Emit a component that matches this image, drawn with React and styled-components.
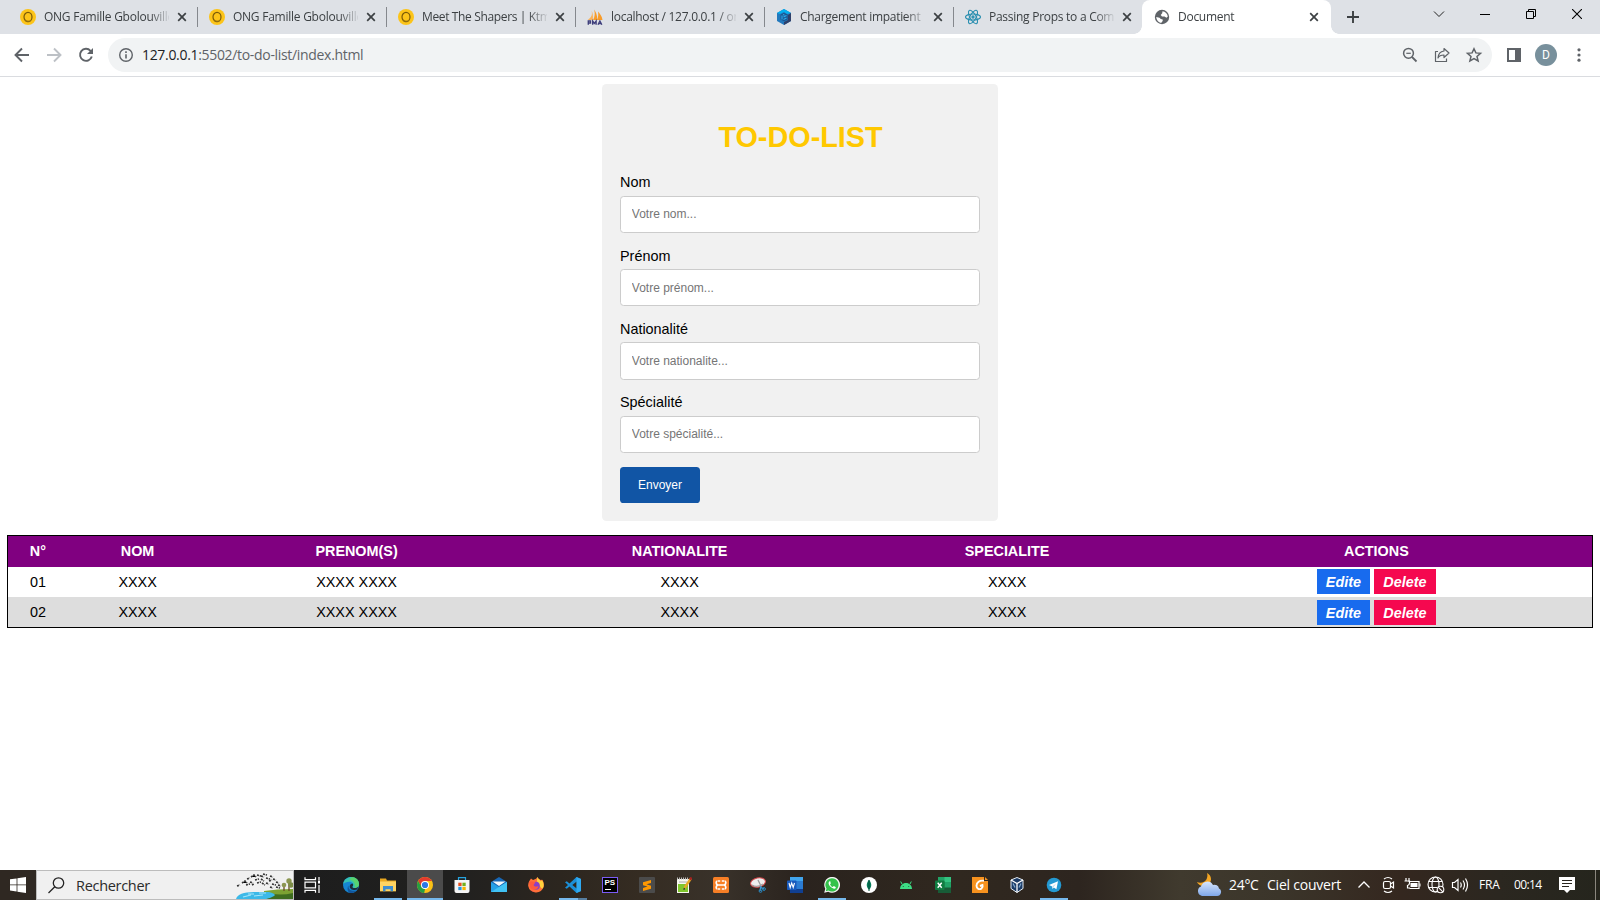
import React from "react";
import styled, { createGlobalStyle } from "styled-components";

const GlobalStyle = createGlobalStyle`
  * { box-sizing: border-box; }
  html, body { margin: 0; height: 100%; overflow: hidden; background: #fff; }
`;

const Screen = styled.div`
  width: 1600px;
  height: 900px;
  display: flex;
  flex-direction: column;
  font-family: "Liberation Sans", Arial, sans-serif;
`;

/* ---------- browser chrome ---------- */

const TabStrip = styled.div`
  height: 34px;
  flex: none;
  display: flex;
  background: #dee1e6;
  padding-left: 9px;
  font-family: "Open Sans", "Noto Sans", sans-serif;
`;

const TabBox = styled.div`
  width: 189px;
  height: 34px;
  flex: none;
  display: flex;
  align-items: center;
  padding: 0 8px 0 ${(p) => (p.$active ? 12 : 11)}px;
  margin-left: ${(p) => (p.$active ? -1 : 0)}px;
  position: relative;
  color: #3c4043;
  background: ${(p) => (p.$active ? "#fff" : "transparent")};
  border-radius: 8px 8px 0 0;
  &::before, &::after {
    content: "";
    display: ${(p) => (p.$active ? "block" : "none")};
    position: absolute;
    bottom: 0;
    width: 8px;
    height: 8px;
  }
  &::before {
    left: -8px;
    background: radial-gradient(circle at 0 0, #dee1e6 7.5px, #fff 8px);
  }
  &::after {
    right: -8px;
    background: radial-gradient(circle at 100% 0, #dee1e6 7.5px, #fff 8px);
  }
`;

const TabTitle = styled.span`
  width: ${(p) => (p.$active ? 123 : 125)}px;
  margin-left: 8px;
  overflow: hidden;
  white-space: nowrap;
  font-size: 12px;
  line-height: 20px;
  letter-spacing: ${(p) => p.$spacing || 0}px;
  mask-image: linear-gradient(to right, #000 106px, transparent 127px);
`;

const TabClose = styled.svg`
  width: 10px;
  height: 10px;
  margin-left: 8px;
`;

const TabDivider = styled.i`
  position: absolute;
  right: 0;
  top: 7px;
  width: 1px;
  height: 20px;
  background: #85888d;
`;

const NewTab = styled.svg`
  width: 16px;
  height: 16px;
  margin: 9px 0 0 14px;
`;

const WindowButtons = styled.div`
  margin-left: auto;
  display: flex;
  height: 28px;
`;

const WindowButton = styled.div`
  width: 46px;
  display: grid;
  place-items: center;
`;

const Toolbar = styled.div`
  height: 43px;
  flex: none;
  display: flex;
  align-items: center;
  background: #fff;
  border-bottom: 1px solid #dadce0;
  padding: 0 10px 0 12px;
  svg { flex: none; }
`;

const NavIcons = styled.div`
  display: flex;
  gap: 12px;
  width: 96px;
`;

const AddressBar = styled.div`
  width: 1384px;
  height: 34px;
  border-radius: 17px;
  background: #f1f3f4;
  display: flex;
  align-items: center;
  padding: 0 8px 0 8px;
`;

const Url = styled.span`
  flex: 1;
  margin-left: 6px;
  padding-bottom: 1px;
  font: 14px/20px "Open Sans", "Noto Sans", sans-serif;
  letter-spacing: -0.32px;
  color: #5f6368;
  b { font-weight: 400; color: #202124; }
`;

const AddressIcons = styled.div`
  display: flex;
  gap: 12px;
`;

const ToolbarEnd = styled.div`
  display: flex;
  align-items: center;
  margin-left: 12px;
`;

const Avatar = styled.div`
  width: 22px;
  height: 22px;
  border-radius: 50%;
  margin: 0 12px 0 11px;
  background: #78909c;
  color: #fff;
  display: grid;
  place-items: center;
  font: 12px/22px Roboto, sans-serif;
`;

/* ---------- page ---------- */

const Page = styled.main`
  height: 793px;
  padding: 7.2px;
  font-size: 14.4px;
  color: #000;
`;

const FormCard = styled.form`
  width: 396px;
  height: 437px;
  margin: 0 auto;
  padding: 18px;
  border-radius: 4.5px;
  background: #f1f1f1;
`;

const Title = styled.h1`
  margin: 19.3px 0 19px;
  padding-left: 1px;
  font-size: 28.8px;
  line-height: 33px;
  text-align: center;
  color: #ffc800;
`;

const Field = styled.label`
  display: block;
  height: 73.3px;
  padding-top: 1px;
  line-height: 17px;
`;

const TextInput = styled.input`
  display: block;
  width: 360px;
  height: 37.5px;
  margin-top: 4.2px;
  padding: 0 10.8px;
  border: 1px solid #ccc;
  border-radius: 3.6px;
  background: #fff;
  font: 12px "Liberation Sans", Arial, sans-serif;
  &::placeholder { color: #757575; }
`;

const SubmitButton = styled.button`
  display: block;
  width: 80px;
  height: 36px;
  padding: 0;
  border: 0;
  border-radius: 3.6px;
  background: #1155a5;
  color: #fff;
  font: 12px "Liberation Sans", Arial, sans-serif;
`;

const Table = styled.section`
  width: 1586px;
  margin-top: 13.8px;
  border: 1px solid #000;
`;

const Row = styled.div`
  display: grid;
  grid-template-columns: 59.4px 140px 298px 348px 307px 431.6px;
  height: ${(p) => (p.$head ? 31 : 30)}px;
  align-items: center;
  text-align: center;
  background: ${(p) => p.$bg};
  color: ${(p) => (p.$head ? "#fff" : "#000")};
  font-weight: ${(p) => (p.$head ? 700 : 400)};
`;

const Actions = styled.div`
  display: flex;
  justify-content: center;
  gap: 4px;
  padding-top: ${(p) => p.$shift || 0}px;
`;

const ActionButton = styled.span`
  height: 25px;
  width: ${(p) => p.$width}px;
  background: ${(p) => p.$bg};
  color: #fff;
  font-weight: 700;
  font-style: italic;
  line-height: 26px;
`;

/* ---------- taskbar ---------- */

const Taskbar = styled.footer`
  height: 30px;
  display: flex;
  color: #fff;
  font-family: "Open Sans", "Noto Sans", sans-serif;
  background: linear-gradient(90deg, #2f2822 0, #2f2822 36px, #1d1d1d 294px, #20201f 450px, #2c261f 560px, #352c22 640px, #39322a 720px, #2a231e 800px, #30281f 960px, #2d251f 1080px, #403a2e 1180px, #3b352a 1280px, #34271f 1400px, #2b2720 1500px, #25251d 1600px);
`;

const Start = styled.div`
  width: 36px;
  display: grid;
  place-items: center;
`;

const Search = styled.div`
  width: 258px;
  display: flex;
  align-items: center;
  background: #f0f0f0;
  border: 1px solid #bcbcbc;
  padding-left: 11px;
  color: #2b2b2b;
  svg { flex: none; }
`;

const SearchText = styled.span`
  width: 161px;
  margin-left: 11px;
  font-size: 14.5px;
  letter-spacing: -0.3px;
`;

const Apps = styled.div`
  display: flex;
  gap: 1px;
  & > :first-child { margin-right: 2px; }
`;

const AppSlot = styled.div`
  width: 36px;
  height: 30px;
  display: grid;
  place-items: center;
  background:
    ${(p) => (p.$line ? `linear-gradient(${p.$line}) 50% 100% / ${p.$full ? 36 : 28}px 2px no-repeat,` : "")}
    ${(p) => (p.$full ? "#4b4b4b" : "transparent")};
`;

const Tray = styled.div`
  margin-left: auto;
  width: 404px;
  display: flex;
  align-items: center;
  svg { flex: none; }
`;

const TrayText = styled.span`
  flex: none;
  width: ${(p) => p.$width}px;
  font-size: ${(p) => p.$size}px;
  letter-spacing: ${(p) => p.$spacing}px;
  white-space: nowrap;
  line-height: 28px;
`;

const TrayIcons = styled.div`
  flex: none;
  display: flex;
  gap: 6px;
  width: 124px;
`;

const ShowDesktop = styled.i`
  width: 1px;
  height: 30px;
  margin-left: 20px;
  background: #8a867e;
`;

/* ---------- drawings ---------- */

const S = ({ s = 16, box = 16, children, ...rest }) => (
  <svg width={s} height={s} viewBox={`0 0 ${box} ${box}`} fill="none" {...rest}>{children}</svg>
);

const SunIcon = () => (
  <S><circle cx="8" cy="8" r="8" fill="#fcc419" /><ellipse cx="8" cy="8" rx="4" ry="4.6" stroke="#7a5a08" strokeWidth="1.2" /><path d="M5 12h6" stroke="#b48a12" strokeWidth=".8" /></S>
);
const PmaIcon = () => (
  <S>
    <path d="M4.5 1.500C5.500 5 5 8 .8 11h5C6.300 7 5.800 4 4.500 1.500z" fill="#f9b25c" />
    <path d="M7 .5c1.200 3 1 7.500-1 10.500h4.300C10.300 6 9 3 7 .5zM11 2.500c.5 3 .3 5.500-.8 8.500H15.500C15 7 13 5 11 2.500z" fill="#f89c2a" />
    <path d="M1.300 15.700v-3.700h2.200v2H1.300M5.700 15.700v-3.700l1.700 2.300 1.700-2.300v3.700M11 15.700l1.900-3.700 1.900 3.700M11.700 14.600h2.400" stroke="#3f3f7c" strokeWidth="1.400" />
  </S>
);
const CubeIcon = () => (
  <S><path d="M8 0l7 4v8l-7 4-7-4V4z" fill="#2379bd" /><path d="M8 0l7 4-4 1-3-2-4 2-3-1z" fill="#03afef" /><path d="M15 4v8l-7 4v-3l4-2V6z" fill="#2f406a" /><path d="M4.500 5.500L8 3.800l3.700 1.800v4.800L8 12.200l-3.500-1.800z" fill="#1c5690" /><path d="M6 6.500v4M7.500 8l3-1.500M7.500 10.500l3-1.500M7 5.500l1.500.8" stroke="#2aaef0" strokeWidth="1.100" /></S>
);
const ReactIcon = () => (
  <S stroke="#2b8fb0" strokeWidth="1.100">
    <ellipse cx="8" cy="8" rx="7.500" ry="3" /><ellipse cx="8" cy="8" rx="7.500" ry="3" transform="rotate(60 8 8)" /><ellipse cx="8" cy="8" rx="7.500" ry="3" transform="rotate(120 8 8)" /><circle cx="8" cy="8" r="1.100" fill="#2b8fb0" />
  </S>
);
const GlobeIcon = () => (
  <S><circle cx="8" cy="8" r="7.200" fill="#5f6368" /><path d="M8.500 2.200c2.800.2 5 2.500 5.300 5.300l-1.300 1.200-2-1.200H8L6.700 6l1.500-1.700zM2.200 8l3.300.7 1.300 1.300 1.900.4v1.600l-1.600 1.900C4.500 13.400 2.300 11 2.200 8z" fill="#fff" /></S>
);
const TabCross = () => (
  <TabClose viewBox="0 0 10 10"><path d="M1.200 1.200l7.600 7.600M8.800 1.200L1.200 8.800" stroke="#3c4043" strokeWidth="1.700" /></TabClose>
);

const BackIcon = () => <S s={20} box={20}><path d="M17 10H4M10 3.500L3.500 10l6.500 6.500" stroke="#5f6368" strokeWidth="1.900" /></S>;
const ForwardIcon = () => <S s={20} box={20}><path d="M3 10h13M10 3.500l6.500 6.500-6.500 6.500" stroke="#bdc1c6" strokeWidth="1.900" /></S>;
const ReloadIcon = () => <S s={20} box={20}><path d="M15.800 11.500A6 6 0 1 1 14.500 5.800L16 7.500" stroke="#5f6368" strokeWidth="1.900" /><path d="M17 3v6h-6z" fill="#5f6368" /></S>;
const InfoIcon = () => <S s={20} box={20}><circle cx="10" cy="10" r="6.300" stroke="#5f6368" strokeWidth="1.400" /><path d="M10 9.200v4.300M10 6.200v1.700" stroke="#5f6368" strokeWidth="1.600" /></S>;
const ZoomOutIcon = () => <S s={20} box={20}><circle cx="8.500" cy="8.300" r="4.900" stroke="#5f6368" strokeWidth="1.500" /><path d="M12 12l4.500 4.500" stroke="#5f6368" strokeWidth="1.800" /><path d="M6.300 8.300h4.500" stroke="#5f6368" strokeWidth="1.200" /></S>;
const ShareIcon = () => <S s={20} box={20} stroke="#5f6368" strokeWidth="1.200" strokeLinejoin="round"><path d="M6 6.500H3.500v10h11v-3" /><path d="M12 3.500l5 4.500-5 4.500V10c-3 0-5 .8-6 3 .2-4 2.500-6.500 6-7z" /></S>;
const StarIcon = () => <S s={20} box={20}><path d="M10 3.700l1.900 4.200 4.600.4-3.500 3.100 1.100 4.500L10 13.500l-4.100 2.400L7 11.400 3.500 8.300l4.600-.4z" stroke="#5f6368" strokeWidth="1.500" /></S>;

const StartLogo = () => (
  <S s={16} fill="#fff"><path d="M0 2.300l6.600-.9v6.100H0zM7.400 1.300L16 0v7.500H7.400zM0 8.300h6.600v6.200L0 13.600zM7.400 8.300H16V16l-8.600-1.300z" /></S>
);
const BirdScene = () => (
  <svg width="57" height="28" viewBox="0 0 57 28">
    <path d="M28 20q13-2 29-2v10H28z" fill="#7da233" /><path d="M34 22q10 3 23 0v6H31z" fill="#3f6d20" />
    <path d="M0 28q2-7 18-7h15q8 2 5 4t-8 3z" fill="#3cb9e8" /><path d="M7 26l8-2M18 25l9-1M12 23h6M23 22h7" stroke="#a3e5fa" strokeWidth="1.200" />
    <path d="M1 15l3-1M6 12l3-2 2 2M11 8l3-1M14 11l3 1M15 6l3-2 2 2M19 9l4-1M21 4l4 1M25 8l3 2M27 3l4 1M25 5l3 1M30 7l4 1M33 10l3-1M34 5l3 1M37 8l3 1M30 12l3 1M36 13l4 1M21 12l4-1M40 11l3 1M42 14l3 1M10 14l4-1M26 12l3 2M34 16l3 1M40 16l4 1M16 14l2-1" stroke="#343434" strokeWidth="1.600" strokeDasharray="2 .8" />
    <path d="M48 20v-5M53 20V10" stroke="#694c23" strokeWidth="1.300" /><circle cx="48" cy="14" r="2.300" fill="#8c9652" /><circle cx="53" cy="10" r="2.700" fill="#8b9650" /><circle cx="55" cy="14" r="2.700" fill="#7d8d48" />
  </svg>
);

const appIcons = {
  tasks: <S stroke="#fff" strokeWidth="1.200"><path d="M1 .3v2.400h10.500V.3M1 15.700v-2.400h10.500v2.400M1 5.200h10.500v5.600H1zM15 0v3M15 8v8" /><path d="M14 3.500h2v3h-2z" fill="#fff" stroke="none" /></S>,
  edge: <S><circle cx="8" cy="8" r="8" fill="#1685d1" /><path d="M.2 7C1 2 5 0 8.200 0 13 0 16 3.300 16 7c0 3-2.200 4-4.300 4-2 0-2.700-.8-2.200-1.600C11 7 9 4.700 6.500 4.700 3.500 4.700 1.200 6 .2 7z" fill="#35c1b2" /><path d="M9 0c4.500.3 7 3.500 7 7 0 3-2.200 4-4.300 4 1-3-.2-7.500-5.700-8.500z" fill="#63d85a" opacity=".75" /><path d="M5.500 8.500c-.5 4 3.500 6.500 8.500 4.800A8 8 0 0 1 7 16C4 15 4 10.500 5.500 8.500z" fill="#12569d" /><path d="M9.700 6.500c1 1.400.3 2.400-.2 3-.5.900.3 1.500 2.200 1.500 1.500 0 2.800-.4 3.500-1.200l-.9 2.800c-4 1.200-8-.4-7.500-3.600.2-1.300 1.400-2.500 2.900-2.500z" fill="#1d2c3a" /></S>,
  files: <S><path d="M0 1.500h6l1 2h9v10.700H0z" fill="#e9a820" /><path d="M0 4.500h16v9.700H0z" fill="#ffd462" /><path d="M3 14.200V9h10v5.200h-2.500v-2h-5v2z" fill="#3e8ed0" /></S>,
  chrome: <S><circle cx="8" cy="8" r="8" fill="#fbc116" /><path d="M1.100 4A8 8 0 0 1 14.900 4H8L4.500 10z" fill="#e33b2e" /><path d="M1.100 4l3.500 6L8 12l-.8 4A8 8 0 0 1 1.100 4z" fill="#269f42" /><circle cx="8" cy="8" r="4" fill="#fff" /><circle cx="8" cy="8" r="3.100" fill="#2b78e4" /></S>,
  store: <S><path d="M4.500 3V.7h7V3" stroke="#27a4e0" strokeWidth="1.200" /><path d="M.5 3h15v11q0 2-2 2h-11q-2 0-2-2z" fill="#f5f5f5" /><path d="M4.300 5.700h3.300V9H4.300z" fill="#e94e1b" /><path d="M8.400 5.700h3.300V9H8.400z" fill="#72b01d" /><path d="M4.300 9.800h3.300v3.300H4.300z" fill="#2795dd" /><path d="M8.400 9.800h3.300v3.300H8.400z" fill="#f7b500" /></S>,
  mail: <S><path d="M0 5l8-5 8 5v10H0z" fill="#1767b5" /><path d="M1.500 4.500h13L8 9z" fill="#f1f7fb" /><path d="M0 5l8 5 8-5v10H0z" fill="#26a0e6" /><path d="M0 15L16 5v10z" fill="#41c2f3" /></S>,
  firefox: <S><path d="M2 3l1-1.500L5 3l3-1.300L9.500 0c.5 2 2.200 2 3.500 3.300L14 2.600c2 2.500 2.200 5.200 1.600 7.400A8 8 0 0 1 .2 9C0 6.500 1 4.500 2 3z" fill="#ff7139" /><path d="M9.500 0c.5 2 2.500 2.500 3.500 4.300L14 3c2 3 2 6 1 8-2 2-3-3-5-5C8.500 4.500 9 2 9.500 0z" fill="#ffd23d" /><circle cx="7.800" cy="8.700" r="4" fill="#8a3fc8" /><path d="M1 5c3-1 4 0 6.500.2L5.500 8c1 2 3 1.700 5 1.200-.5 3.500-5 4.800-8 2z" fill="#ff5a3d" /><path d="M.5 9.500c1.500 4.500 6 6.500 10 5A8 8 0 0 1 .5 9.500z" fill="#f0306d" /></S>,
  code: <S><path d="M11.500 0L16 2v12l-4.500 2L4.500 9.500 1.800 11.700 0 10.800l3-2.800-3-2.800 1.800-.9 2.700 2.200zM11.700 4.500L7.300 8l4.400 3.500z" fill="#1b8fd8" fillRule="evenodd" /><path d="M11.500 0L16 2v12l-4.500 2z" fill="#2faaf1" /></S>,
  sublime: <S><rect width="16" height="16" rx="1" fill="#4b4b4b" /><path d="M12 3v3L7.500 7.300 12 8.800v3L4 14v-3l4.500-1.400L4 8.200v-3z" fill="#ff9800" /></S>,
  notepad: <S><path d="M1 2h12v14H1z" fill="#f7f7ef" /><path d="M2 7h10v8H2z" fill="#7fc62c" /><path d="M1 1.500h12" stroke="#bbb" strokeWidth="2" strokeDasharray="1 1" /><path d="M3 5h8" stroke="#aaa" /><path d="M14.800 1.500L8.500 11" stroke="#e5a825" strokeWidth="2.400" /><path d="M15.500.5L14 2.700" stroke="#a32220" strokeWidth="2.400" /><path d="M8.500 11l-.7 1.800" stroke="#333" strokeWidth="1.300" /></S>,
  xampp: <S><rect width="16" height="16" rx="1.500" fill="#f77f26" /><path d="M5 4h6M5 12h6M4.500 4c-1.800 0-1.800 3.700.5 4-2.300.3-2.300 4-.5 4M11.500 4c1.800 0 1.800 3.700-.5 4 2.300.3 2.300 4 .5 4M5 8h6" stroke="#fff" strokeWidth="1.700" /><path d="M8 2.500v3.500M8 10v3.500" stroke="#f77f26" strokeWidth="1.600" /></S>,
  snip: <S><ellipse cx="8" cy="5.500" rx="7.500" ry="4.500" transform="rotate(-12 8 5.500)" fill="#eee" stroke="#d74a4d" strokeWidth="1" /><path d="M2 8q5 3 11-1M8 3l3 6" stroke="#9c9c9c" strokeWidth="1.300" /><path d="M10 10l4 2M11 9l-1 5" stroke="#3a9bdc" strokeWidth="1.300" /><circle cx="14" cy="12" r="1.400" stroke="#2988bf" /><circle cx="10.500" cy="14" r="1.400" stroke="#2988bf" /></S>,
  word: <S><rect x="3" width="13" height="16" rx="1" fill="#2b7cd3" /><path d="M3 0h13v4H3z" fill="#41a5ee" /><path d="M3 12h13v4H3z" fill="#103f91" /><rect y="3.500" width="9.500" height="9.500" rx=".8" fill="#185abd" /><path d="M2 6l1.200 4.500L4.700 6l1.500 4.500L7.500 6" stroke="#fff" strokeWidth="1.100" /></S>,
  whatsapp: <S><path d="M.2 15.800l1.100-4A7.900 7.900 0 1 1 4.200 14.700z" fill="#f5f5f5" /><path d="M1.800 14.200l.7-2.600A6.600 6.600 0 1 1 4.500 13.500z" fill="#34c24b" /><path d="M5.600 4.200c-2 1.300-.6 4 1 5.500s4 2.900 5.200 1.200l-.2-1-1.800-.8-1 1C7.700 9.700 6.600 8.600 6 7.400l.8-1L6.300 4.300z" fill="#fff" /></S>,
  mongo: <S><circle cx="8" cy="8" r="8" fill="#fff" /><path d="M8 2.800c3 3.500 3 7.200 0 10-3-2.800-3-6.500 0-10z" fill="#087d5b" /><path d="M8 3v11" stroke="#00513b" /></S>,
  android: <S><path d="M2 12c.2-3.500 2.500-6 6-6s5.800 2.500 6 6z" fill="#3ddc84" /><path d="M4 7L2.700 4.500M12 7l1.300-2.500" stroke="#3ddc84" /><circle cx="5.300" cy="9.500" r=".6" fill="#254" /><circle cx="10.700" cy="9.500" r=".6" fill="#254" /></S>,
  excel: <S><path d="M3 0h13v16H3z" fill="#21a366" /><path d="M9.500 0H16v5H9.500z" fill="#33c481" /><path d="M3 5h6.500v5.500H3z" fill="#107c41" /><path d="M3 10.500h13V16H3z" fill="#185c37" /><rect y="3.500" width="9.500" height="9.500" rx=".8" fill="#107c41" /><path d="M2.700 5.800l4 5M6.700 5.800l-4 5" stroke="#fff" strokeWidth="1.400" /></S>,
  foxit: <S><path d="M0 0h12v4h4v12H0z" fill="#f7921e" /><path d="M13 0l3 3h-3z" fill="#f7921e" /><path d="M12 3.800C7.500 3 4.500 5.500 4.500 8.700c0 3 3 4.300 5 2.800 1.200-1 1.500-2 1-3.500L8 9" stroke="#fff" strokeWidth="1.900" /></S>,
  vbox: <S><path d="M8 .5l6 2.500v8.500l-6 4-6-4V3z" fill="#1b3b66" stroke="#e5edf5" strokeWidth="1" /><path d="M2 3l6 3.500L14 3M8 6.500v9" stroke="#fff" strokeWidth="1.300" /><path d="M4 6.500l2 4M12 6.500l-2 4" stroke="#7ba4cc" strokeWidth="1.300" /></S>,
  telegram: <S><circle cx="8" cy="8" r="7.300" fill="#2499d2" /><path d="M3 8l9-3.700-1.600 8-2.600-1.700L6.500 12l-.3-2.500z" fill="#fff" /><path d="M6.300 9.500l4-3.300-3 4z" fill="#b7d9ed" /></S>,
};

const PsBox = styled.div`
  width: 16px;
  height: 16px;
  border: 1px solid #7b5cf5;
  background: #000;
  color: #fff;
  font: 700 8px/9px "Liberation Sans", sans-serif;
  padding-left: 1.5px;
  &::after {
    content: "";
    display: block;
    width: 6px;
    height: 1px;
    margin-top: 2px;
    background: #fff;
  }
`;

const WeatherSvg = styled.svg`
  width: 26px;
  height: 24px;
  margin-right: 7px;
`;

const Weather = () => (
  <WeatherSvg viewBox="0 0 26 24">
    <defs><linearGradient id="cloud" x2="0" y2="1"><stop stopColor="#d7e6fd" /><stop offset="1" stopColor="#7fa7e8" /></linearGradient></defs>
    <path d="M11 0c1 3 0 7-2.500 8.500S3 10 1 9c1 2 4 5 8 4s6-4 6-7-2-5-4-6z" fill="#f5a623" />
    <path d="M6 23a5 5 0 0 1-1-9.500 6.500 6.500 0 0 1 12-1.500 4.500 4.500 0 0 1 6 3.500 4 4 0 0 1-2 7.500z" fill="url(#cloud)" />
  </WeatherSvg>
);

/* ---------- data ---------- */

const tabs = [
  { icon: <SunIcon />, title: "ONG Famille Gbolouville", spacing: -0.25 },
  { icon: <SunIcon />, title: "ONG Famille Gbolouville", spacing: -0.25 },
  { icon: <SunIcon />, title: "Meet The Shapers | Ktm", spacing: -0.36 },
  { icon: <PmaIcon />, title: "localhost / 127.0.0.1 / on", spacing: -0.28 },
  { icon: <CubeIcon />, title: "Chargement impatient | S", spacing: -0.29 },
  { icon: <ReactIcon />, title: "Passing Props to a Comp", spacing: -0.27 },
  { icon: <GlobeIcon />, title: "Document", spacing: -0.27, active: true },
];

const fields = [
  ["Nom", "Votre nom..."],
  ["Prénom", "Votre prénom..."],
  ["Nationalité", "Votre nationalite..."],
  ["Spécialité", "Votre spécialité..."],
];

const headings = ["N°", "NOM", "PRENOM(S)", "NATIONALITE", "SPECIALITE", "ACTIONS"];
const people = [
  { cells: ["01", "XXXX", "XXXX XXXX", "XXXX", "XXXX"], bg: "#fff", shift: 0 },
  { cells: ["02", "XXXX", "XXXX XXXX", "XXXX", "XXXX"], bg: "#ddd", shift: 1 },
];

const blue = "#76b9ed, #76b9ed";
const apps = [
  { icon: appIcons.tasks }, { icon: appIcons.edge }, { icon: appIcons.files, line: blue },
  { icon: appIcons.chrome, line: blue, full: true }, { icon: appIcons.store }, { icon: appIcons.mail },
  { icon: appIcons.firefox }, { icon: appIcons.code, line: "90deg, #76b9ed 19px, #577fa0 19px" },
  { icon: <PsBox>PS</PsBox> }, { icon: appIcons.sublime }, { icon: appIcons.notepad },
  { icon: appIcons.xampp }, { icon: appIcons.snip }, { icon: appIcons.word },
  { icon: appIcons.whatsapp, line: blue }, { icon: appIcons.mongo }, { icon: appIcons.android },
  { icon: appIcons.excel }, { icon: appIcons.foxit }, { icon: appIcons.vbox },
  { icon: appIcons.telegram, line: blue },
];

export default function App() {
  return (
    <Screen>
      <GlobalStyle />
      <TabStrip>
        {tabs.map((t, i) => (
          <TabBox key={i} $active={t.active}>
            {t.icon}
            <TabTitle $spacing={t.spacing} $active={t.active}>{t.title}</TabTitle>
            <TabCross />
            {i < 5 && <TabDivider />}
          </TabBox>
        ))}
        <NewTab viewBox="0 0 16 16"><path d="M8 2v12M2 8h12" stroke="#3c4043" strokeWidth="1.900" /></NewTab>
        <WindowButtons>
          <WindowButton><S s={12} box={12}><path d="M1 3.500l5 5 5-5" stroke="#222" /></S></WindowButton>
          <WindowButton><S s={10} box={10}><path d="M0 5.500h10" stroke="#000" /></S></WindowButton>
          <WindowButton><S s={10} box={10}><path d="M.5 2.500h7v7h-7zM2.500 2.500v-2h7v7h-2" stroke="#000" /></S></WindowButton>
          <WindowButton><S s={10} box={10}><path d="M0 0l10 10M10 0L0 10" stroke="#000" strokeWidth="1.100" /></S></WindowButton>
        </WindowButtons>
      </TabStrip>
      <Toolbar>
        <NavIcons><BackIcon /><ForwardIcon /><ReloadIcon /></NavIcons>
        <AddressBar>
          <InfoIcon />
          <Url><b>127.0.0.1</b>:5502/to-do-list/index.html</Url>
          <AddressIcons><ZoomOutIcon /><ShareIcon /><StarIcon /></AddressIcons>
        </AddressBar>
        <ToolbarEnd>
          <S s={20} box={20}><path d="M4 4h12v12H4z" stroke="#5f6368" strokeWidth="2" /><path d="M11 4h6v12h-6z" fill="#5f6368" /></S>
          <Avatar>D</Avatar>
          <S s={20} box={20} fill="#5f6368"><circle cx="10" cy="4.800" r="1.600" /><circle cx="10" cy="10" r="1.600" /><circle cx="10" cy="15.200" r="1.600" /></S>
        </ToolbarEnd>
      </Toolbar>

      <Page>
        <FormCard>
          <Title>TO-DO-LIST</Title>
          {fields.map(([label, hint]) => (
            <Field key={label}>{label}<TextInput type="text" placeholder={hint} /></Field>
          ))}
          <SubmitButton type="button">Envoyer</SubmitButton>
        </FormCard>
        <Table>
          <Row $head $bg="#800080">{headings.map((h) => <span key={h}>{h}</span>)}</Row>
          {people.map((p) => (
            <Row key={p.cells[0]} $bg={p.bg}>
              {p.cells.map((c, i) => <span key={i}>{c}</span>)}
              <Actions $shift={p.shift}>
                <ActionButton $width={53} $bg="#186bee">Edite</ActionButton>
                <ActionButton $width={62} $bg="#f5084f">Delete</ActionButton>
              </Actions>
            </Row>
          ))}
        </Table>
      </Page>

      <Taskbar>
        <Start><StartLogo /></Start>
        <Search>
          <S s={17} box={17}><circle cx="10.500" cy="6" r="5.200" stroke="#222" strokeWidth="1.300" /><path d="M6.800 9.800L.5 16" stroke="#222" strokeWidth="1.300" /></S>
          <SearchText>Rechercher</SearchText>
          <BirdScene />
        </Search>
        <Apps>
          {apps.map((a, i) => <AppSlot key={i} $line={a.line} $full={a.full}>{a.icon}</AppSlot>)}
        </Apps>
        <Tray>
          <Weather />
          <TrayText $width={38} $size={14} $spacing={-0.3}>24°C</TrayText>
          <TrayText $width={88} $size={14} $spacing={-0.22}>Ciel couvert</TrayText>
          <TrayIcons>
            <S s={18} box={18} stroke="#fff" strokeWidth="1.300"><path d="M3.500 11.500L9 6l5.500 5.500" /></S>
            <S s={18} box={18} stroke="#fff" strokeWidth="1.200"><rect x="4.500" y="5.500" width="7" height="7" rx="1.500" /><path d="M11.500 8l3-2v6l-3-2M5 3q4-3 8 0M5 15q4 3 8 0" /></S>
            <S s={18} box={18}><path d="M5.500 5.500h10.500v7H6.500M3 2v3M6 2v3M1.500 5h5v2q0 2-2 2.500V12H7" stroke="#fff" strokeWidth="1.200" /><path d="M7.500 7h7v4h-7z" fill="#fff" /><path d="M17 7.500v3" stroke="#fff" /></S>
            <S s={18} box={18} stroke="#fff" strokeWidth="1.100"><circle cx="8.500" cy="8.500" r="7.500" /><ellipse cx="8.500" cy="8.500" rx="3.500" ry="7.500" /><path d="M2 5.500h13M2 11.500h8" /><circle cx="13.500" cy="13.500" r="3.300" fill="#34271f" /><path d="M11.200 11.200l4.600 4.600" /></S>
            <S s={18} box={18} stroke="#fff" strokeWidth="1.200"><path d="M1.500 6.500h2l3.500-3v11l-3.500-3h-2zM9.500 6.500q1.500 2.500 0 5M12 4.500q3 4.500 0 9M14.500 2.500q4 6.500 0 13" /></S>
          </TrayIcons>
          <TrayText $width={35} $size={12} $spacing={-0.2}>FRA</TrayText>
          <TrayText $width={45} $size={12} $spacing={-0.6}>00:14</TrayText>
          <S s={16}><path d="M0 0h16v13h-5l-3 3-3-3H0z" fill="#fff" /><path d="M3 3.500h10M3 6.500h10M3 9.500h7" stroke="#2a261f" strokeWidth="1.100" /></S>
          <ShowDesktop />
        </Tray>
      </Taskbar>
    </Screen>
  );
}
